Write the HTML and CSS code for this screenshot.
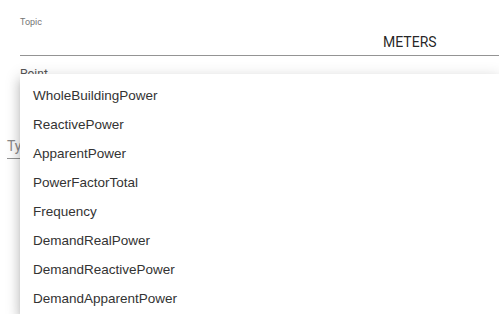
FILE: index.html
```html
<!DOCTYPE html>
<html lang="en">
<head>
    <meta charset="UTF-8">
    <title>Meter Points</title>
    <link rel="stylesheet" href="styles.css">
</head>
<body>
    <div class="page">
        <div class="field topic">
            <label class="field-label">Topic</label>
            <div class="field-input">METERS</div>
        </div>

        <div class="field point">
            <label class="field-label dark">Point</label>
            <div class="field-input"></div>
        </div>

        <div class="field type">
            <div class="field-input placeholder">Type</div>
        </div>

        <ul class="menu">
            <li>WholeBuildingPower</li>
            <li>ReactivePower</li>
            <li>ApparentPower</li>
            <li>PowerFactorTotal</li>
            <li>Frequency</li>
            <li>DemandRealPower</li>
            <li>DemandReactivePower</li>
            <li>DemandApparentPower</li>
        </ul>
    </div>
</body>
</html>
```

FILE: styles.css
```css
html, body {
    margin: 0;
    height: 100%;
    overflow: hidden;
    background: #fff;
}
.page {
    position: relative;
    height: 100%;
    font-family: Roboto, "Liberation Sans", Arial, sans-serif;
    color: rgba(0,0,0,0.87);
}
.field {
    display: flex;
    flex-direction: column;
}
.topic {
    margin-left: 20px;
    padding-top: 16px;
}
.field-label {
    font-size: 9px;
    line-height: 12px;
    color: #757575;
}
.field-label.dark {
    color: #555;
    font-size: 12px;
}
.topic .field-input {
    height: 26px;
    padding: 1px 0 0 363px;
    font-size: 14px;
    line-height: 26px;
    border-bottom: 1px solid #949494;
}
.point {
    margin-left: 20px;
    padding-top: 12px;
}
.point .field-input {
    height: 40px;
}
.type {
    margin-left: 7px;
    width: 300px;
    padding-top: 14px;
}
.type .field-input {
    height: 24px;
    font-size: 14px;
    line-height: 24px;
    color: #8a8a8a;
    border-bottom: 1px solid #949494;
}
.menu {
    position: absolute;
    left: 20px;
    top: 74px;
    right: 0;
    bottom: 0;
    margin: 0;
    padding: 7px 0 0;
    list-style: none;
    background: #fff;
    box-shadow: 0 5px 5px -3px rgba(0,0,0,0.2), 0 8px 10px 1px rgba(0,0,0,0.14), 0 3px 14px 2px rgba(0,0,0,0.12);
}
.menu li {
    height: 29px;
    line-height: 29px;
    padding-left: 13px;
    font-family: "Liberation Sans", Arial, sans-serif;
    font-size: 13.5px;
    color: #333;
}
```
